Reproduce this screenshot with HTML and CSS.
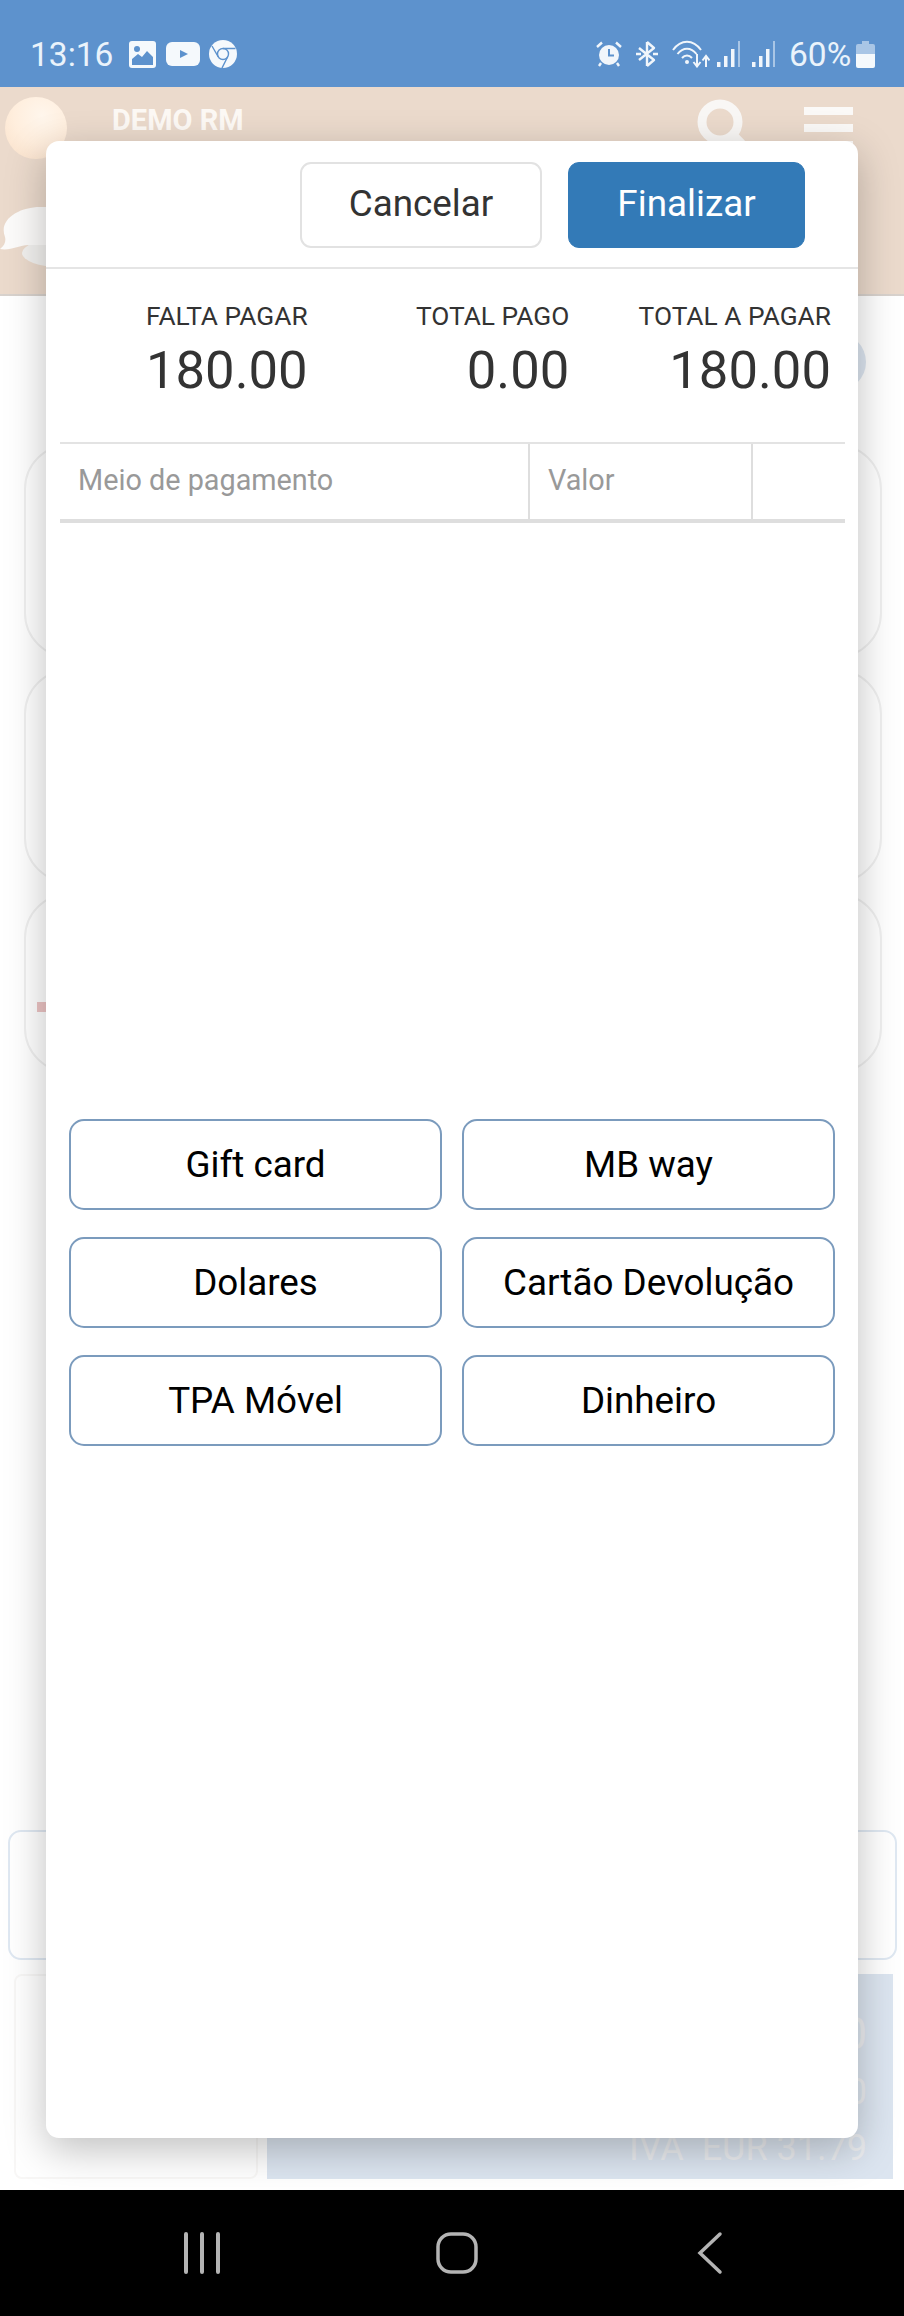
FILE: index.html
```html
<!DOCTYPE html>
<html lang="pt">
<head>
  <meta charset="UTF-8">
  <meta name="viewport" content="width=device-width, initial-scale=1.0">
  <title>Pagamento</title>
  <link rel="stylesheet" href="styles.css">
</head>
<body>
  <div class="phone">
    <!-- Status bar -->
    <div class="status-bar">
      <div class="status-left">
        <span class="clock">13:16</span>
        <svg class="ico-picture" width="27" height="27" viewBox="0 0 27 27">
          <rect width="27" height="27" rx="3" fill="#f5f9fc"/>
          <circle cx="8" cy="8" r="3" fill="#5d92cd"/>
          <path d="M3 22 L3 18 L9 13 L13 16 L18 10 L24 16 L24 24 L3 24 Z" fill="#5d92cd"/>
        </svg>
        <svg class="ico-video" width="34" height="24" viewBox="0 0 34 24">
          <rect width="34" height="24" rx="6" fill="#f5f9fc"/>
          <path d="M14 8 L22 12 L14 16 Z" fill="#5d92cd"/>
        </svg>
        <svg class="ico-chrome" width="28" height="28" viewBox="0 0 28 28">
          <circle cx="14" cy="14" r="14" fill="#f5f9fc"/>
          <circle cx="14" cy="14" r="5.5" fill="none" stroke="#5d92cd" stroke-width="1.4"/>
          <path d="M14 8.5 H26.5 M9.3 17 L3 6 M18.8 16.5 L13 28" fill="none" stroke="#5d92cd" stroke-width="1.4"/>
        </svg>
      </div>
      <div class="status-right">
        <svg class="ico-alarm" width="26" height="26" viewBox="0 0 26 26">
          <circle cx="13" cy="14" r="10" fill="#f1f6fb"/>
          <path d="M1 6 L6 1.5 M25 6 L20 1.5 M5 22 L3 25 M21 22 L23 25" stroke="#f1f6fb" stroke-width="2.4" fill="none"/>
          <path d="M13 8 V14.5 H18" stroke="#5d92cd" stroke-width="2" fill="none"/>
        </svg>
        <svg class="ico-bt" width="24" height="28" viewBox="0 0 24 28">
          <path d="M12 2 L19 8 L4 20 M12 26 L19 20 L4 8 M12 2 V26" stroke="#f1f6fb" stroke-width="2.4" fill="none" stroke-linejoin="round"/>
          <path d="M1 14 H6 M18 14 H23" stroke="#f1f6fb" stroke-width="2.4"/>
        </svg>
        <svg class="ico-wifi" width="38" height="28" viewBox="0 0 38 28">
          <path d="M1 10 C9 -1 21 -1 29 10 M5.500 14 C11 7 19 7 24.500 14 M10 18 C13 14.500 17 14.500 20 18" stroke="#f1f6fb" stroke-width="2" fill="none"/>
          <circle cx="15" cy="22" r="2" fill="#f1f6fb"/>
          <path d="M25 14 V26 M21.500 22 L25 26.500 L28.500 22 M34 27 V17 M30.500 20.500 L34 16 L37.500 20.500" stroke="#f1f6fb" stroke-width="2" fill="none"/>
        </svg>
        <svg class="ico-signal" width="23" height="26" viewBox="0 0 23 26">
          <rect x="0" y="21" width="3.500" height="5" fill="#f1f6fb"/>
          <rect x="7" y="15" width="3.500" height="11" fill="#f1f6fb"/>
          <rect x="14" y="8" width="3.500" height="18" fill="#f1f6fb"/>
          <rect x="21" y="0" width="2" height="26" fill="#a9c6e6"/>
        </svg>
        <svg class="ico-signal" width="23" height="26" viewBox="0 0 23 26">
          <rect x="0" y="21" width="3.500" height="5" fill="#f1f6fb"/>
          <rect x="7" y="15" width="3.500" height="11" fill="#f1f6fb"/>
          <rect x="14" y="8" width="3.500" height="18" fill="#f1f6fb"/>
          <rect x="21" y="0" width="2" height="26" fill="#a9c6e6"/>
        </svg>
        <span class="battery-text">60%</span>
        <svg class="ico-battery" width="19" height="27" viewBox="0 0 19 27">
          <path d="M6 0 H13 V3 H17 Q19 3 19 5 V13 H0 V5 Q0 3 2 3 H6 Z" fill="#a9c6e6"/>
          <path d="M0 13 H19 V25 Q19 27 17 27 H2 Q0 27 0 25 Z" fill="#f5f9fc"/>
        </svg>
      </div>
    </div>

    <div class="app">
      <!-- Page behind the dialog -->
      <div class="top-header">
        <div class="brand-art">
          <div class="sphere"></div>
          <svg class="bubbles" width="46" height="60" viewBox="0 0 46 60">
            <ellipse cx="60" cy="46" rx="38" ry="14" fill="#f2f1ef"/>
            <path d="M0 42 C5 38 6 34 5 30 C-2 12 20 0 40 0 H46 V38 H28 C20 38 10 44 0 42 Z" fill="#fcfbfa"/>
          </svg>
        </div>
        <span class="brand-name">DEMO RM</span>
        <div class="top-actions">
          <svg class="ico-search" width="48" height="48" viewBox="0 0 48 48">
            <circle cx="23" cy="23" r="18" fill="none" stroke="#f9f7f5" stroke-width="9"/>
            <path d="M35 35 L46 46" stroke="#f9f7f5" stroke-width="9"/>
          </svg>
          <div class="burger">
            <span class="burger-bar"></span>
            <span class="burger-bar"></span>
            <span class="burger-bar"></span>
          </div>
        </div>
      </div>

      <div class="page">
        <div class="page-tools"><div class="round-btn"></div></div>
        <div class="card"></div>
        <div class="card"></div>
        <div class="card card-short"><span class="red-tag"></span></div>
        <div class="note-box"></div>
        <div class="summary">
          <div class="summary-left"></div>
          <div class="summary-right">
            <span class="summary-total">EUR 180.00</span>
            <span>EUR 0.00</span>
            <span>IVA&nbsp; EUR 31.79</span>
          </div>
        </div>
      </div>

      <!-- Payment dialog -->
      <div class="modal">
        <div class="modal-head">
          <button class="btn btn-cancel">Cancelar</button>
          <button class="btn btn-finish">Finalizar</button>
        </div>

        <div class="totals">
          <div class="total">
            <div class="total-label">FALTA PAGAR</div>
            <div class="total-value">180.00</div>
          </div>
          <div class="total">
            <div class="total-label">TOTAL PAGO</div>
            <div class="total-value">0.00</div>
          </div>
          <div class="total">
            <div class="total-label">TOTAL A PAGAR</div>
            <div class="total-value">180.00</div>
          </div>
        </div>

        <div class="pay-table">
          <div class="pay-cell">Meio de pagamento</div>
          <div class="pay-cell">Valor</div>
          <div class="pay-cell"></div>
        </div>

        <div class="methods">
          <button class="method">Gift card</button>
          <button class="method">MB way</button>
          <button class="method">Dolares</button>
          <button class="method">Cartão Devolução</button>
          <button class="method">TPA Móvel</button>
          <button class="method">Dinheiro</button>
        </div>
      </div>
    </div>

    <!-- Navigation bar -->
    <div class="nav-bar">
      <svg width="38" height="44" viewBox="0 0 38 44">
        <path d="M3 3 V41 M19 3 V41 M35 3 V41" stroke="#b4b4b4" stroke-width="4" stroke-linecap="round"/>
      </svg>
      <svg class="nav-home" width="44" height="44" viewBox="0 0 44 44">
        <rect x="3" y="3" width="38" height="38" rx="13" fill="none" stroke="#b4b4b4" stroke-width="3.500"/>
      </svg>
      <svg width="26" height="44" viewBox="0 0 26 44">
        <path d="M23 3 L3 22 L23 41" fill="none" stroke="#b4b4b4" stroke-width="3.500" stroke-linecap="round"/>
      </svg>
    </div>
  </div>
</body>
</html>
```

FILE: styles.css
```css
/* General styling */
* {
  box-sizing: border-box;
}

body {
  margin: 0;
  font-family: Roboto, "Liberation Sans", sans-serif;
  background-color: #fff;
}

.phone {
  display: flex;
  flex-direction: column;
  height: 2316px;
  overflow: hidden;
}

/* Status bar */
.status-bar {
  display: flex;
  justify-content: space-between;
  align-items: flex-end;
  height: 87px;
  padding: 0 29px 17px 30px;
  background-color: #5d92cd;
  color: #eaf3fb;
  flex-shrink: 0;
}

.status-left,
.status-right {
  display: flex;
  align-items: center;
}

.clock,
.battery-text {
  font-size: 33.5px;
  line-height: 30px;
  padding-top: 2px;
}

.clock {
  width: 99px;
}

.ico-video {
  margin-left: 10px;
}

.ico-chrome {
  margin-left: 9px;
}

.ico-bt {
  margin-left: 13px;
}

.ico-wifi {
  margin-left: 13px;
}

.ico-signal {
  margin-left: 7px;
}

.ico-signal + .ico-signal {
  margin-left: 12px;
}

.battery-text {
  margin-left: 14px;
  width: 67px;
}

/* Page behind the dialog */
.app {
  position: relative;
  flex: 1;
  display: flex;
  flex-direction: column;
  min-height: 0;
}

.top-header {
  display: flex;
  height: 209px;
  background-color: #ebdacc;
  border-bottom: 2px solid #d8d2cd;
  flex-shrink: 0;
}

.brand-art {
  display: flex;
  flex-direction: column;
  width: 112px;
  padding: 10px 0 0 5px;
}

.sphere {
  width: 62px;
  height: 62px;
  border-radius: 50%;
  background: radial-gradient(circle at 60% 30%, #fff6ec 0%, #ffeedd 50%, #f9e0c9 100%);
}

.bubbles {
  margin: 48px 0 0 -5px;
}

.brand-name {
  margin: 16px 0 0 0;
  font-size: 29px;
  font-weight: 700;
  line-height: 34px;
  color: #fdf9f5;
}

.top-actions {
  display: flex;
  margin-left: auto;
  padding: 12px 51px 0 0;
  gap: 59px;
}

.burger {
  display: flex;
  flex-direction: column;
  gap: 9px;
  width: 49px;
  padding-top: 8px;
}

.burger-bar {
  height: 8px;
  background-color: #fbf9f7;
}

.page {
  flex: 1;
  display: flex;
  flex-direction: column;
  padding: 37px 0 11px;
  min-height: 0;
}

.page-tools {
  display: flex;
  justify-content: flex-end;
  padding-right: 38px;
}

.round-btn {
  width: 58px;
  height: 58px;
  border-radius: 50%;
  background-color: #dde6f1;
}

.card {
  height: 214px;
  margin: 11px 22px 0 24px;
  border: 2px solid #f0f0f0;
  border-radius: 45px;
}

.page-tools + .card {
  margin-top: 53px;
}

.card-short {
  height: 180px;
  margin-top: 10px;
  padding: 107px 0 0 11px;
}

.red-tag {
  display: block;
  width: 30px;
  height: 10px;
  background-color: #ecc4c4;
}

.note-box {
  height: 130px;
  margin: auto 7px 0 8px;
  border: 2px solid #dfe8f2;
  border-radius: 13px;
}

.summary {
  display: flex;
  height: 205px;
  margin: 14px 11px 0 14px;
  gap: 9px;
}

.summary-left {
  width: 244px;
  border: 2px solid #f8f7f6;
  border-radius: 8px;
}

.summary-right {
  flex: 1;
  display: flex;
  flex-direction: column;
  align-items: flex-end;
  justify-content: flex-end;
  gap: 6px;
  padding: 0 26px 6px 0;
  background-color: #dce5f0;
  font-size: 36px;
  line-height: 50px;
  color: #eceef1;
}

.summary-total {
  font-size: 44px;
  line-height: 54px;
}

/* Payment dialog */
.modal {
  position: absolute;
  top: 54px;
  left: 46px;
  width: 812px;
  height: 1997px;
  background-color: #fff;
  border-radius: 13px;
  box-shadow: 0 12px 40px rgba(0, 0, 0, 0.25);
}

.modal-head {
  display: flex;
  justify-content: flex-end;
  gap: 26px;
  height: 128px;
  padding: 21px 53px 0 0;
  border-bottom: 2px solid #e5e5e5;
}

.btn {
  height: 86px;
  padding-bottom: 4px;
  font-family: inherit;
  font-size: 36.8px;
  border-radius: 11px;
}

.btn-cancel {
  width: 242px;
  background-color: #fff;
  color: #333;
  border: 2px solid #e2e2e2;
}

.btn-finish {
  width: 237px;
  background-color: #337ab7;
  color: #fff;
  border: 1px solid #337ab7;
}

.totals {
  display: grid;
  grid-template-columns: repeat(3, 1fr);
  padding: 29px 27px 0 0;
  height: 173px;
  color: #333;
}

.total {
  text-align: right;
}

.total-label {
  font-size: 26.3px;
  line-height: 36px;
}

.total-value {
  font-size: 52.6px;
  line-height: 60px;
  margin-top: 6px;
}

.pay-table {
  display: grid;
  grid-template-columns: 470px 223px 1fr;
  height: 81px;
  margin: 0 13px 0 14px;
  border-top: 2px solid #e3e3e3;
  border-bottom: 4px solid #dedede;
}

.pay-cell {
  padding: 0 18px 0 18px;
  font-size: 28.8px;
  line-height: 73px;
  color: #999;
  border-right: 2px solid #dedede;
}

.pay-cell:last-child {
  border-right: none;
}

.methods {
  display: grid;
  grid-template-columns: repeat(2, 373px);
  gap: 27px 20px;
  padding: 596px 0 0 23px;
}

.method {
  height: 91px;
  font-family: inherit;
  font-size: 36.8px;
  color: #000;
  background-color: #fff;
  border: 2px solid #7b9bbd;
  border-radius: 15px;
}

/* Navigation bar */
.nav-bar {
  display: flex;
  justify-content: space-between;
  align-items: center;
  height: 126px;
  padding: 0 181px 0 183px;
  background-color: #000;
  flex-shrink: 0;
}

.nav-home {
  margin-right: 4px;
}
```
